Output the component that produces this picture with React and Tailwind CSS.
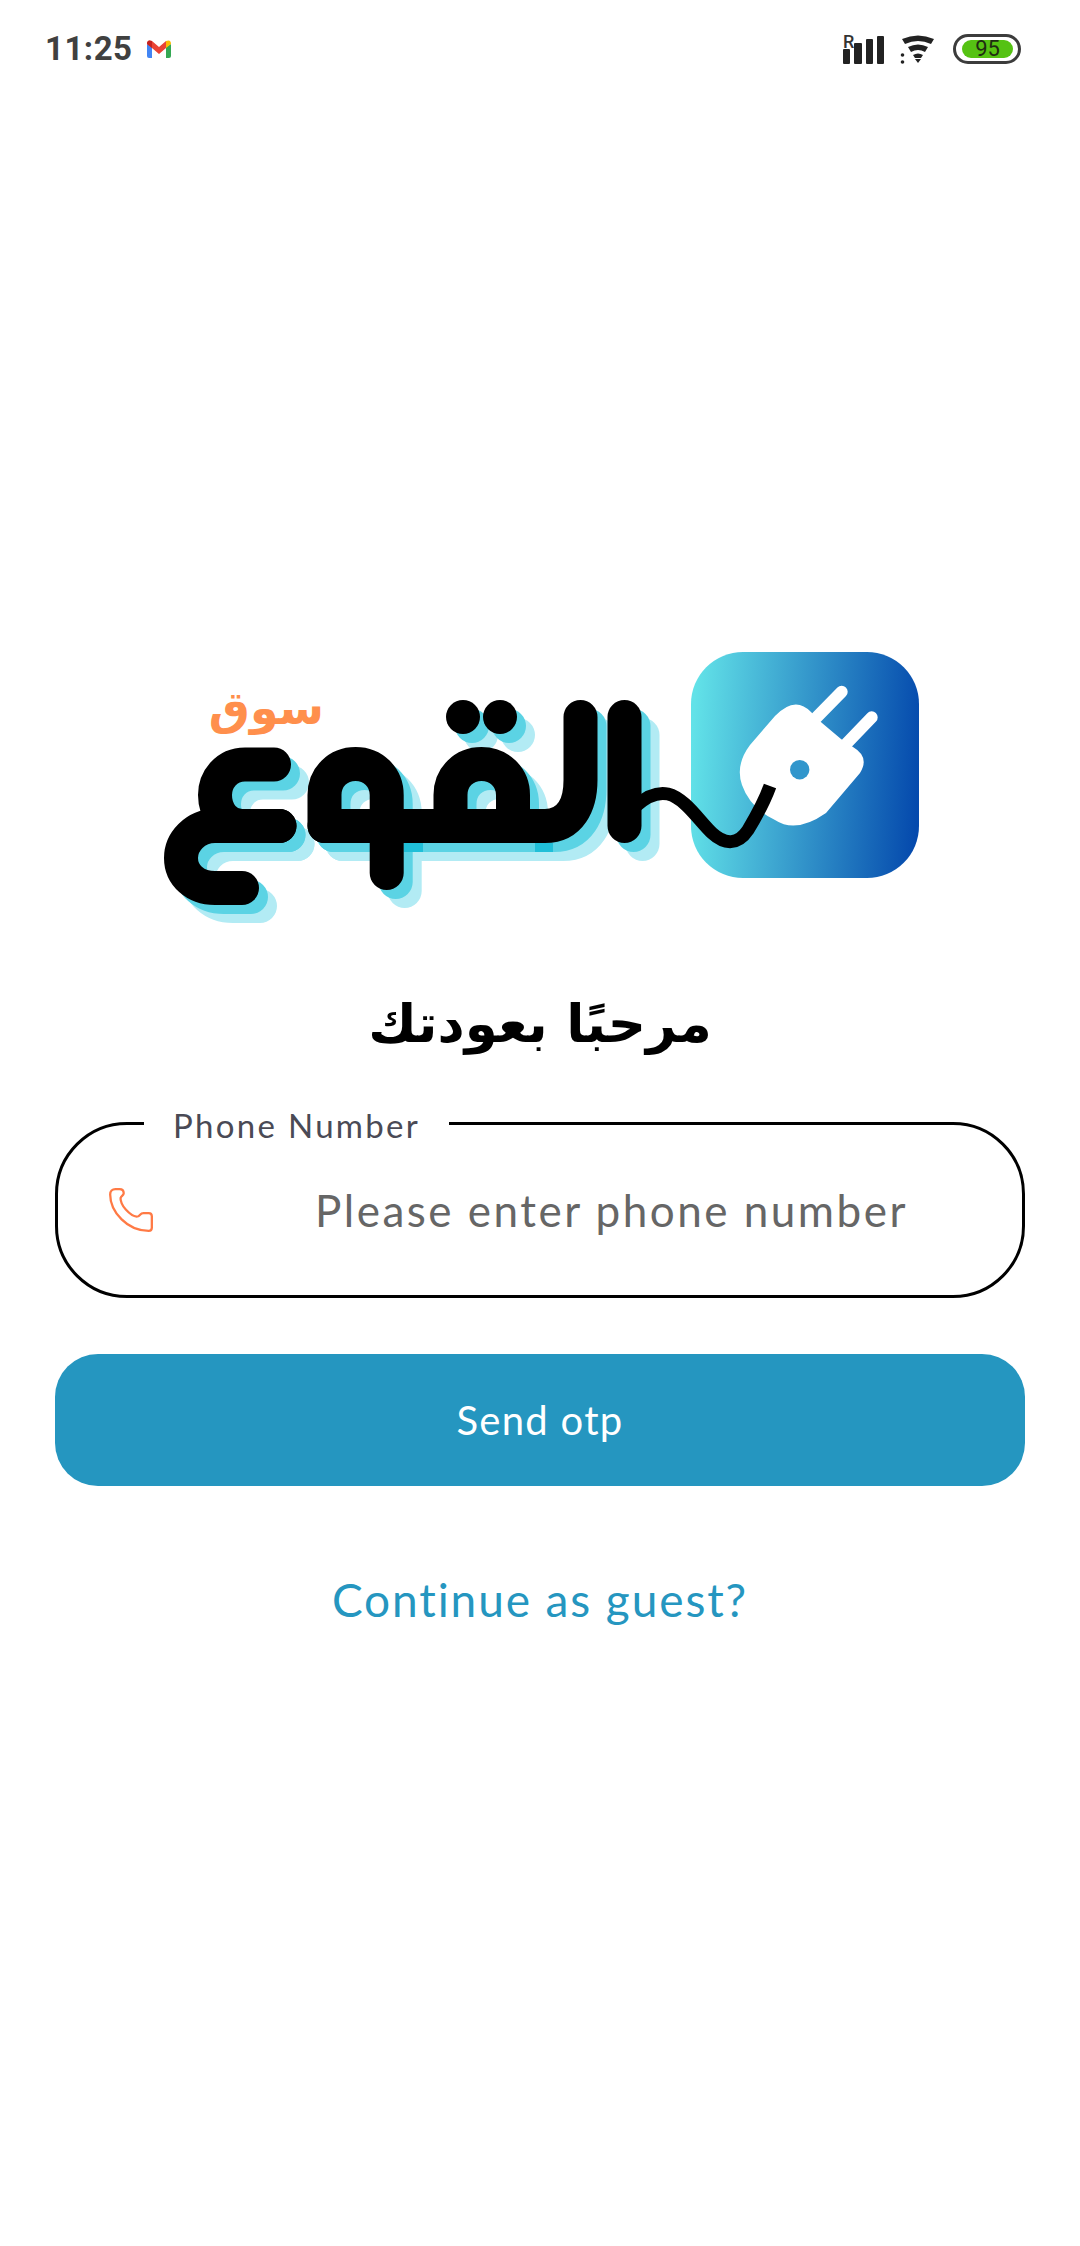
import React from "react";

const LogoWord = ({ color }) => (
  <g>
    <g fill="none" stroke={color} strokeWidth="34" strokeLinecap="round" strokeLinejoin="round">
      <path d="M274 764.5H245C226 764.5 215 780 215 795C215 812 226 826 242 826H279.5" />
      <path d="M279.5 826H215C195 826 181 842 181 858C181 875 195 888 215 888H242" />
      <path d="M324.5 826V795C324.5 777 338 764 355.6 764C373 764 386.7 777 386.7 795V873" />
      <path d="M450.5 826V795C450.5 777 464 764 481.5 764C499 764 513 777 513 795V826" />
      <path d="M324.5 826H545C570 826 580.5 805 580.5 780V717" />
      <path d="M624.5 717V826" />
    </g>
    <ellipse cx="463" cy="717" rx="17" ry="17" fill={color} />
    <ellipse cx="500" cy="717" rx="17" ry="17" fill={color} />
  </g>
);

const Logo = () => (
  <svg viewBox="160 640 770 290" className="w-[770px] h-[290px]" role="img" aria-label="القوع">
    <defs>
      <linearGradient id="tile" x1="0" y1="0.47" x2="1" y2="0.53">
        <stop offset="0" stopColor="#62e2e8" />
        <stop offset="1" stopColor="#054aad" />
      </linearGradient>
    </defs>
    <rect x="691" y="652" width="228" height="226" rx="52" fill="url(#tile)" />
    <path
      d="M775 716L750 745Q735 765 742 785Q750 808 775 820Q796 834 826 813L860 773Q870 757 853 747L841 739L822 723L811 712Q795 695 775 716Z"
      fill="#fff"
    />
    <path d="M816.7 717.3L841.7 691.7M846.7 743.3L871.7 717.3" stroke="#fff" strokeWidth="12" strokeLinecap="round" />
    <circle cx="799.7" cy="769.7" r="9.7" fill="#3196cc" />

    <g transform="translate(18 18)"><LogoWord color="#b2ebf4" /></g>
    <g transform="translate(9 9)"><LogoWord color="#5bd3e4" /></g>
    <rect x="404" y="843" width="19" height="9" fill="#20bfd8" />
    <rect x="535" y="843" width="18" height="9" fill="#20bfd8" />
    <LogoWord color="#000" />

    <path
      d="M636 806C648 795 658 792 668 794C685 798 700 822 712 833C725 845 738 845 748 830C757 815 765 800 770 786"
      fill="none"
      stroke="#000"
      strokeWidth="13"
    />
    <text x="324" y="724" textAnchor="start" fill="#ff8f4c" fontSize="46" fontWeight="700" fontFamily="'DejaVu Sans', sans-serif" direction="rtl">
      سوق
    </text>
  </svg>
);

const SignalIcon = () => (
  <svg viewBox="0 0 42 30" className="w-[42px] h-[30px] overflow-visible">
    <text x="0" y="14" fontSize="18" fontWeight="500" fill="#333" fontFamily="Roboto, sans-serif">R</text>
    <rect x="0" y="15" width="7" height="15" rx="1" fill="#222" />
    <rect x="11" y="9" width="8" height="21" rx="1" fill="#222" />
    <rect x="23" y="5" width="7" height="25" rx="1" fill="#222" />
    <rect x="34" y="2" width="7" height="28" rx="1" fill="#222" />
  </svg>
);

const WifiIcon = () => (
  <svg viewBox="0 0 36 30" className="w-[36px] h-[30px]">
    <path d="M2 5Q18 -2 34 5L31 10Q18 4 5 10Z" fill="#222" />
    <path d="M8 13Q18 8 28 13L25 18Q18 14 11 18Z" fill="#222" />
    <path d="M13 21Q18 18 23 21L21 24H15Z" fill="#222" />
    <path d="M15 25H21L18 29Z" fill="#222" />
    <circle cx="2.5" cy="21" r="1.8" fill="#222" />
    <circle cx="2.5" cy="28" r="1.8" fill="#222" />
  </svg>
);

const GmailIcon = () => (
  <svg viewBox="0 0 26 20" className="w-[26px] h-[20px]">
    <path d="M1 5V17Q1 19 3 19H6V8Z" fill="#4285f4" />
    <path d="M25 5V17Q25 19 23 19H20V8Z" fill="#34a853" />
    <path d="M1 5Q1 0 6 2L13 8L20 2V9L13 15L6 9Z" fill="#ea4335" />
    <path d="M1 5Q1 0 6 2V9Z" fill="#c5221f" />
    <path d="M20 2Q25 0 25 5L20 9Z" fill="#fbbc04" />
  </svg>
);

const App = () => {
  return (
    <div className="w-[1080px] h-[2246px] bg-white flex flex-col overflow-hidden font-['Lato',sans-serif]">
      {/* status bar */}
      <div className="flex items-center justify-between pl-[45px] pr-[59px] pt-[31px] h-[66px]">
        <div className="flex items-center gap-[13px]">
          <span className="font-['Roboto',sans-serif] font-bold text-[33px] leading-none text-[#404040] tracking-[0.5px]">11:25</span>
          <GmailIcon />
        </div>
        <div className="flex items-center gap-[15px]">
          <SignalIcon />
          <WifiIcon />
          <div className="w-[68px] h-[30px] ml-[2px] rounded-full border-[3px] border-[#3c3c3c] pl-[6px] pr-[5px] py-[3px]">
            <div className="h-full rounded-full bg-[#55c213] flex items-center justify-center font-['Roboto',sans-serif] text-[22px] leading-none text-[#1f2d12]">
              95
            </div>
          </div>
        </div>
      </div>

      {/* logo */}
      <div className="pl-[160px] pt-[574px]">
        <Logo />
      </div>

      <h1 dir="rtl" className="mt-[59px] text-center font-['DejaVu_Sans',sans-serif] font-bold text-[53px] leading-[70px] text-black">
        مرحبًا بعودتك
      </h1>

      {/* phone field */}
      <div className="relative mx-[55px] mt-[63px] h-[176px] rounded-[72px] border-[3px] border-black flex items-center pl-[48px]">
        <span className="absolute left-[86px] top-[-19px] bg-white px-[29px] text-[33px] leading-[38px] tracking-[2.3px] text-[#4a4a55]">
          Phone Number
        </span>
        <svg viewBox="0 0 24 24" className="w-[50px] h-[50px] shrink-0" fill="none" stroke="#ff7a45" strokeWidth="1.1" strokeLinejoin="round">
          <path d="M2 4.5C2 3 3 2 4.5 2H6.5C8 2 8.5 3 8.5 4C8.5 5 7.2 5.3 7 6.2C6.8 7.5 7.8 10 9.5 11.8C11.5 14 14 15.5 15.5 15C16.3 14.7 16.5 13.5 18 13.5H20.5C21.5 13.5 22 14.2 22 15V20.5C22 21.5 21.3 22 20.5 22C16 22 11.5 20.5 7.5 16.5C3.5 12.5 2 8.5 2 4.5Z" />
        </svg>
        <span className="ml-[159px] text-[44px] tracking-[2.5px] text-[#666]">Please enter phone number</span>
      </div>

      <button className="mx-[55px] mt-[56px] h-[132px] rounded-[43px] bg-[#2596c0] text-white text-[40px] tracking-[1.3px]">
        Send otp
      </button>

      <p className="mt-[90px] text-center text-[46px] leading-[48px] tracking-[1.9px] text-[#2596c0]">Continue as guest?</p>
    </div>
  );
};

export default App;
